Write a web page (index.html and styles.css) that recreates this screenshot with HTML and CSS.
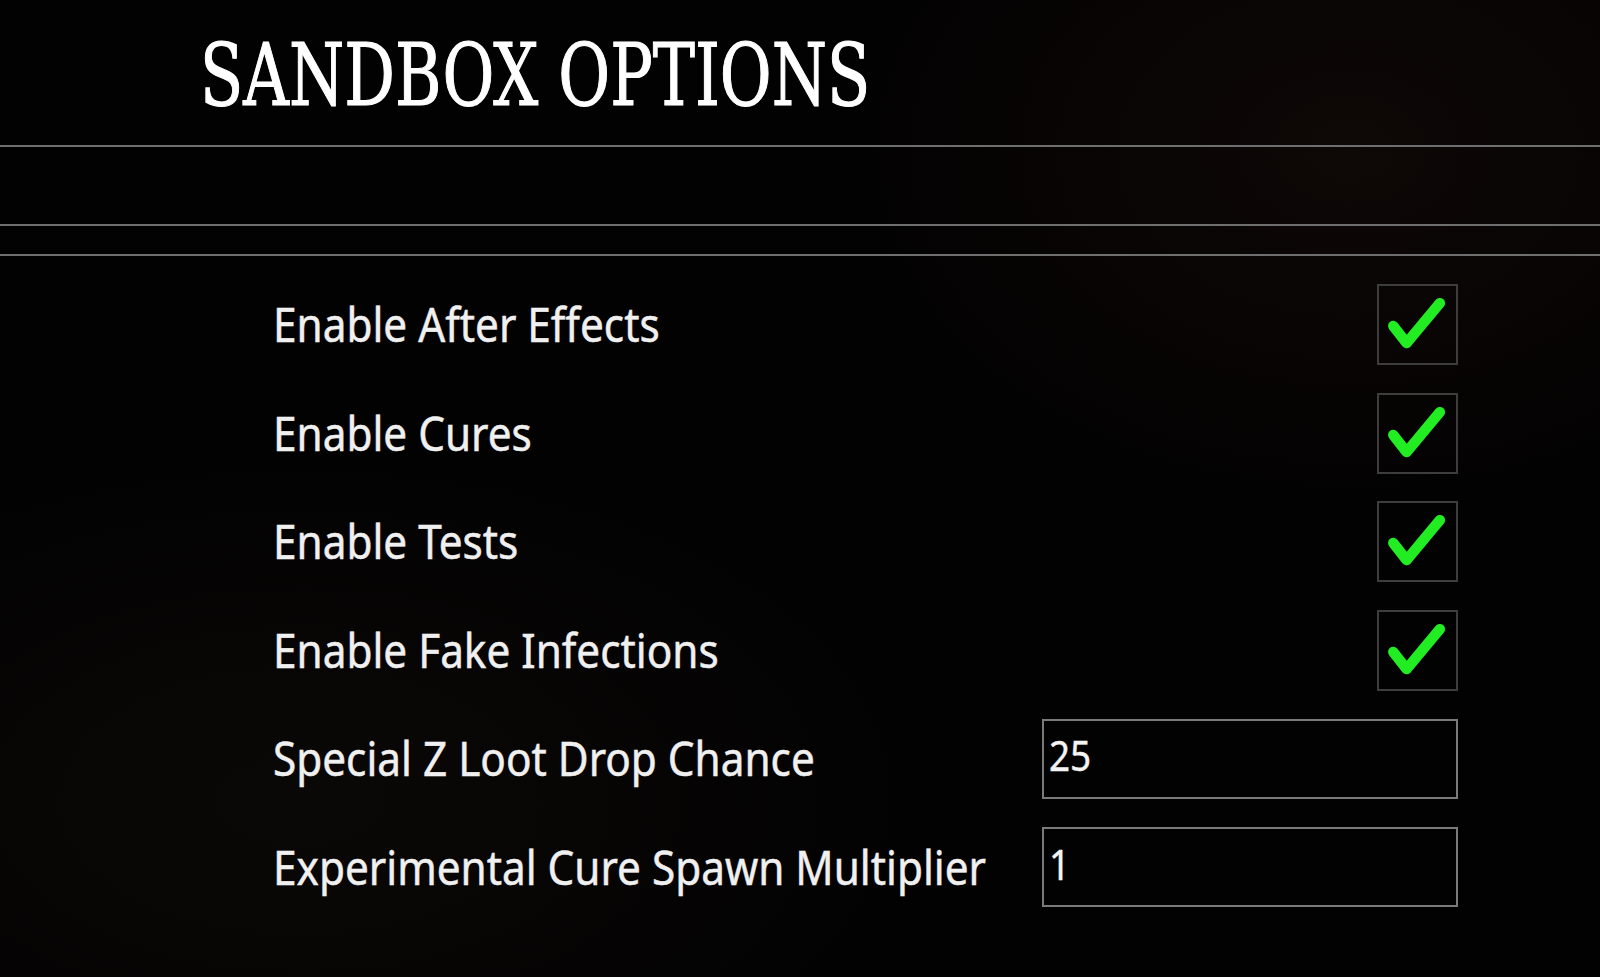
FILE: index.html
```html
<!DOCTYPE html>
<html lang="en">
<head>
<meta charset="utf-8">
<title>Sandbox Options</title>
<link rel="stylesheet" href="styles.css">
</head>
<body>
<div class="screen">
  <header class="header">
    <h1 class="title">SANDBOX OPTIONS</h1>
  </header>
  <div class="band"></div>
  <div class="band thin"></div>
  <main class="options">
    <div class="row">
      <span class="label">Enable After Effects</span>
      <span class="check"><svg viewBox="0 0 81 81" width="77" height="77"><path d="M15 42 L29 60 L64 18" /></svg></span>
    </div>
    <div class="row">
      <span class="label">Enable Cures</span>
      <span class="check"><svg viewBox="0 0 81 81" width="77" height="77"><path d="M15 42 L29 60 L64 18" /></svg></span>
    </div>
    <div class="row">
      <span class="label">Enable Tests</span>
      <span class="check"><svg viewBox="0 0 81 81" width="77" height="77"><path d="M15 42 L29 60 L64 18" /></svg></span>
    </div>
    <div class="row">
      <span class="label">Enable Fake Infections</span>
      <span class="check"><svg viewBox="0 0 81 81" width="77" height="77"><path d="M15 42 L29 60 L64 18" /></svg></span>
    </div>
    <div class="row">
      <span class="label">Special Z Loot Drop Chance</span>
      <span class="field"><span class="value">25</span></span>
    </div>
    <div class="row">
      <span class="label">Experimental Cure Spawn Multiplier</span>
      <span class="field"><span class="value">1</span></span>
    </div>
  </main>
</div>
</body>
</html>
```

FILE: styles.css
```css
* { box-sizing: border-box; }
html, body {
  margin: 0;
  padding: 0;
  width: 1600px;
  height: 977px;
  overflow: hidden;
  background: #040303;
}
.screen {
  width: 1600px;
  height: 977px;
  background:
    radial-gradient(ellipse 700px 500px at 1350px 150px, rgba(40, 22, 16, 0.3), rgba(0,0,0,0) 70%),
    radial-gradient(ellipse 900px 500px at 300px 800px, rgba(18, 16, 14, 0.45), rgba(0,0,0,0) 70%),
    #030202;
  color: #f2f2f2;
}
.header {
  height: 147px;
  border-bottom: 2px solid #6f6f6f;
  padding-left: 200px;
  padding-top: 32px;
}
.title {
  margin: 0;
  font-family: "DejaVu Serif", "Liberation Serif", serif;
  font-weight: normal;
  font-size: 86px;
  line-height: 1;
  color: #ffffff;
  -webkit-text-stroke: 1.2px #ffffff;
  display: inline-block;
  transform: scaleX(0.735);
  transform-origin: left top;
  white-space: nowrap;
}
.band {
  height: 79px;
  border-bottom: 2px solid #6f6f6f;
}
.band.thin {
  height: 30px;
}
.options {
  display: flex;
  flex-direction: column;
  gap: 27.5px;
  padding: 28px 142px 0 273px;
}
.row {
  display: flex;
  align-items: center;
  justify-content: space-between;
  height: 81px;
}
.label {
  flex: 1 1 auto;
  min-width: 0;
  font-family: "Noto Sans", "Open Sans", sans-serif;
  font-size: 47px;
  line-height: 1;
  color: #f0f0f0;
  -webkit-text-stroke: 0.5px #f0f0f0;
  display: inline-block;
  transform: scaleX(0.9);
  transform-origin: left center;
  white-space: nowrap;
  padding-top: 0;
}
.check {
  flex: none;
  width: 81px;
  height: 81px;
  border: 2px solid #3d3d3d;
  display: flex;
  align-items: center;
  justify-content: center;
}
.check svg path {
  fill: none;
  stroke: #22ec22;
  stroke-width: 11;
  stroke-linecap: round;
  stroke-linejoin: round;
}
.field {
  flex: none;
  width: 416px;
  height: 80px;
  border: 2px solid #7a7a7a;
  display: flex;
  align-items: center;
  padding-left: 5px;
  padding-bottom: 6px;
}
.value {
  font-family: "Noto Sans", "Open Sans", sans-serif;
  font-size: 41px;
  line-height: 1;
  color: #f4f4f4;
  -webkit-text-stroke: 0.4px #f4f4f4;
  display: inline-block;
  transform: scaleX(0.9);
  transform-origin: left center;
}
```
